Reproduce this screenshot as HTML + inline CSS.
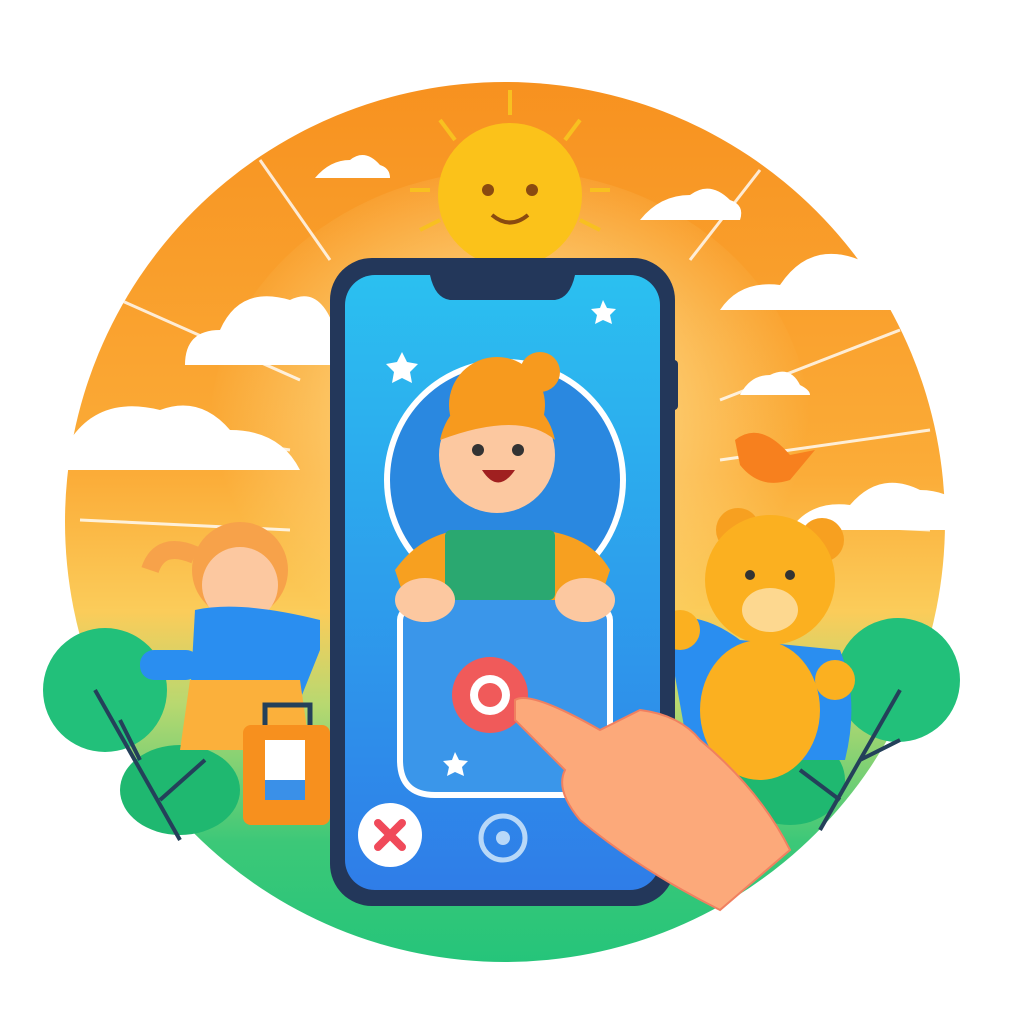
<!DOCTYPE html>
<html><head><meta charset="utf-8"><style>html,body{margin:0;padding:0;background:#fff;width:1024px;height:1024px;overflow:hidden}</style></head>
<body>
<svg width="1024" height="1024" viewBox="0 0 1024 1024" xmlns="http://www.w3.org/2000/svg">
<defs>
<linearGradient id="bg" x1="0" y1="0" x2="0" y2="1">
<stop offset="0" stop-color="#f7901e"/><stop offset="0.45" stop-color="#fbac38"/><stop offset="0.6" stop-color="#fbcc5a"/><stop offset="0.7" stop-color="#b8d870"/><stop offset="0.85" stop-color="#3cc878"/><stop offset="1" stop-color="#22c47a"/>
</linearGradient>
<radialGradient id="glow" cx="0.5" cy="0.45" r="0.5"><stop offset="0" stop-color="#fff4b0" stop-opacity="0.9"/><stop offset="1" stop-color="#fff4b0" stop-opacity="0"/></radialGradient>
<linearGradient id="scr" x1="0" y1="0" x2="0" y2="1"><stop offset="0" stop-color="#2bc0f0"/><stop offset="1" stop-color="#2f7de8"/></linearGradient>
<clipPath id="circ"><circle cx="505" cy="522" r="440"/></clipPath>
</defs>
<g clip-path="url(#circ)">
<rect x="0" y="60" width="1024" height="920" fill="url(#bg)"/>
<ellipse cx="510" cy="430" rx="300" ry="260" fill="url(#glow)"/>
<g stroke="#fff" stroke-width="3" opacity="0.8">
<line x1="120" y1="300" x2="300" y2="380"/><line x1="90" y1="420" x2="290" y2="450"/><line x1="80" y1="520" x2="290" y2="530"/><line x1="900" y1="330" x2="720" y2="400"/><line x1="930" y1="430" x2="720" y2="460"/><line x1="930" y1="530" x2="720" y2="520"/><line x1="260" y1="160" x2="330" y2="260"/><line x1="760" y1="170" x2="690" y2="260"/>
</g>
</g>
<g stroke="#f8c020" stroke-width="4">
<line x1="510" y1="90" x2="510" y2="115"/><line x1="440" y1="120" x2="455" y2="140"/><line x1="580" y1="120" x2="565" y2="140"/><line x1="410" y1="190" x2="430" y2="190"/><line x1="610" y1="190" x2="590" y2="190"/><line x1="420" y1="230" x2="440" y2="220"/><line x1="600" y1="230" x2="580" y2="220"/>
</g>
<circle cx="510" cy="195" r="72" fill="#fbc21a"/>
<circle cx="488" cy="190" r="6" fill="#8a4a10"/><circle cx="532" cy="190" r="6" fill="#8a4a10"/>
<path d="M492 215 Q510 230 528 215" stroke="#8a4a10" stroke-width="4" fill="none"/>
<g fill="#fff">
<path d="M185 365 Q185 330 220 330 Q240 285 290 300 Q320 285 335 330 L335 365 Z"/>
<path d="M25 470 Q30 440 70 440 Q100 395 160 410 Q200 395 230 430 Q280 430 300 470 Z"/>
<path d="M720 310 Q740 280 780 285 Q810 240 860 260 Q900 260 920 290 Q950 290 955 310 Z"/>
<path d="M790 530 Q810 500 850 505 Q880 470 920 490 Q960 490 985 530 Z"/>
<path d="M640 220 Q660 195 690 195 Q710 180 730 200 Q745 205 740 220 Z"/>
<path d="M315 178 Q330 160 350 160 Q365 148 380 165 Q390 168 390 178 Z"/>
<path d="M740 395 Q750 375 770 375 Q790 365 800 385 Q810 390 810 395 Z"/>
</g>
<circle cx="105" cy="690" r="62" fill="#22c07a"/>
<circle cx="898" cy="680" r="62" fill="#22c07a"/>
<ellipse cx="790" cy="780" rx="55" ry="45" fill="#1fb870"/>
<ellipse cx="180" cy="790" rx="60" ry="45" fill="#1fb870"/>
<g stroke="#24405a" stroke-width="4" fill="none"><path d="M95 690 L180 840 M140 760 L120 720 M160 800 L205 760"/><path d="M900 690 L820 830 M860 760 L900 740 M840 800 L800 770"/></g>
<circle cx="240" cy="570" r="48" fill="#f7a24a"/>
<circle cx="240" cy="585" r="38" fill="#fcc8a0"/>
<path d="M150 570 Q160 540 195 555" stroke="#f7a24a" stroke-width="18" fill="none"/>
<path d="M195 610 Q240 600 320 620 L320 650 L300 700 L190 700 Z" fill="#2a8ef0"/>
<path d="M190 680 L300 680 L310 750 L180 750 Z" fill="#fbb03b"/>
<rect x="140" y="650" width="60" height="30" rx="14" fill="#2a8ef0"/>
<rect x="243" y="725" width="87" height="100" rx="8" fill="#f7901e"/>
<rect x="265" y="740" width="40" height="40" fill="#fff"/><rect x="265" y="780" width="40" height="20" fill="#3a90e8"/>
<path d="M265 725 L265 705 L310 705 L310 725" stroke="#24405a" stroke-width="5" fill="none"/>
<circle cx="738" cy="530" r="22" fill="#f7a020"/><circle cx="822" cy="540" r="22" fill="#f7a020"/>
<circle cx="770" cy="580" r="65" fill="#fbb020"/>
<ellipse cx="770" cy="610" rx="28" ry="22" fill="#fdd890"/>
<circle cx="750" cy="575" r="5" fill="#333"/><circle cx="790" cy="575" r="5" fill="#333"/>
<path d="M665 620 Q700 610 740 640 L840 650 Q860 700 845 760 L690 760 Z" fill="#2a8ef0"/>
<ellipse cx="760" cy="710" rx="60" ry="70" fill="#fbb020"/>
<circle cx="835" cy="680" r="20" fill="#fbb020"/><circle cx="680" cy="630" r="20" fill="#fbb020"/>
<path d="M735 440 Q760 420 790 455 L815 450 L790 480 Q760 490 740 465 Z" fill="#f7801e"/>
<rect x="330" y="258" width="345" height="648" rx="42" fill="#23375a"/>
<rect x="345" y="275" width="315" height="615" rx="30" fill="url(#scr)"/>
<path d="M430 275 L575 275 Q570 298 555 300 L450 300 Q435 298 430 275 Z" fill="#23375a"/>
<rect x="668" y="360" width="10" height="50" rx="4" fill="#23375a"/>
<circle cx="505" cy="480" r="118" fill="#2a88e0" stroke="#fff" stroke-width="6"/>
<path d="M400 620 Q400 595 505 590 Q610 595 610 620 L610 760 Q610 795 575 795 L435 795 Q400 795 400 760 Z" fill="#3a96ea" stroke="#fff" stroke-width="6"/>
<circle cx="497" cy="405" r="48" fill="#f79a1e"/>
<circle cx="540" cy="372" r="20" fill="#f79a1e"/>
<circle cx="497" cy="455" r="58" fill="#fcc8a0"/>
<path d="M440 440 Q450 395 497 395 Q545 395 555 440 Q520 410 440 440 Z" fill="#f79a1e"/>
<circle cx="478" cy="450" r="6" fill="#333"/><circle cx="518" cy="450" r="6" fill="#333"/>
<path d="M482 470 Q498 495 515 470 Z" fill="#a02020"/>
<path d="M395 570 Q420 535 460 530 L540 530 Q590 535 610 570 L600 600 L405 600 Z" fill="#f7a020"/>
<rect x="445" y="530" width="110" height="70" rx="6" fill="#2aa870"/>
<ellipse cx="425" cy="600" rx="30" ry="22" fill="#fcc8a0"/><ellipse cx="585" cy="600" rx="30" ry="22" fill="#fcc8a0"/>
<circle cx="490" cy="695" r="38" fill="#f05a5a"/><circle cx="490" cy="695" r="20" fill="#fff"/><circle cx="490" cy="695" r="12" fill="#f05a5a"/>
<circle cx="390" cy="835" r="32" fill="#fff"/>
<path d="M378 823 L402 847 M402 823 L378 847" stroke="#f04a5a" stroke-width="8" stroke-linecap="round"/>
<circle cx="503" cy="838" r="22" fill="none" stroke="#b8d8f8" stroke-width="5"/><circle cx="503" cy="838" r="7" fill="#b8d8f8"/>
<g fill="#fff"><path d="M402 352 l5 10 11 2 -8 8 2 11 -10-5 -10 5 2-11 -8-8 11-2z"/><path d="M603 300 l4 8 9 1 -6 6 2 9 -9-4 -8 4 2-9 -6-6 9-1z"/><path d="M455 752 l4 8 9 1 -6 6 2 9 -9-4 -8 4 2-9 -6-6 9-1z"/></g>
<path d="M515 700 Q530 690 600 730 L640 710 Q680 715 700 740 Q760 790 790 850 L720 910 Q640 870 580 820 Q555 790 565 770 Q530 735 515 720 Z" fill="#fca97a" stroke="#f08060" stroke-width="2"/>
</svg>
</body></html>
